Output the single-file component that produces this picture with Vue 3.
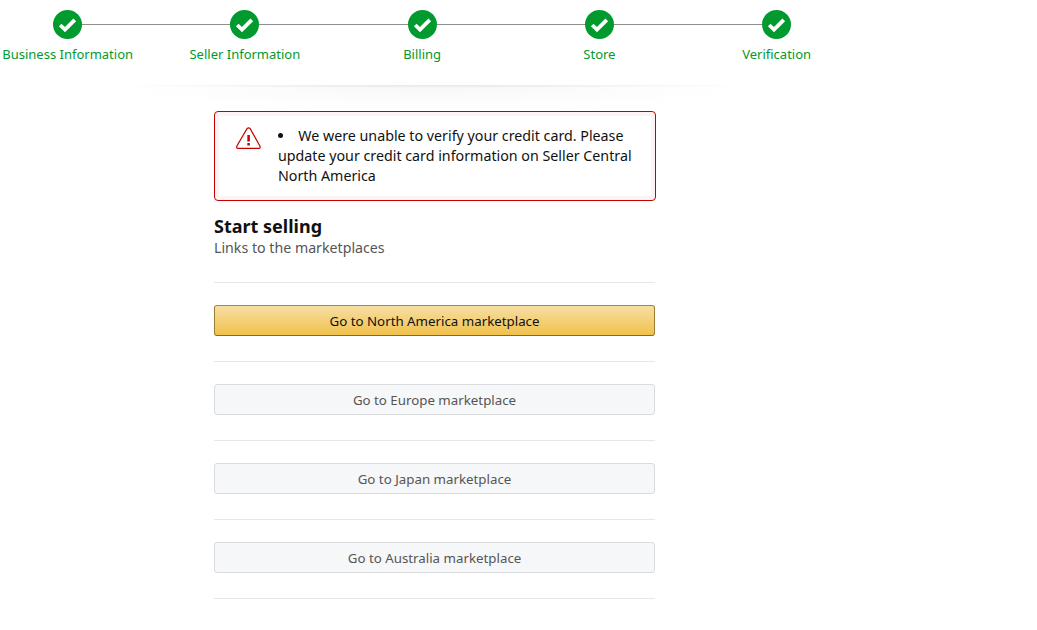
<script setup>
const steps = ['Business Information', 'Seller Information', 'Billing', 'Store', 'Verification']
const markets = [
  { name: 'North America', primary: true },
  { name: 'Europe', primary: false },
  { name: 'Japan', primary: false },
  { name: 'Australia', primary: false },
]
</script>

<template>
  <div class="page">
    <header class="stepper">
      <div v-for="(step, i) in steps" :key="step" class="step" :class="{ last: i === steps.length - 1 }">
        <span class="dot">
          <svg width="29" height="29" viewBox="0 0 29 29">
            <circle cx="14.5" cy="14.5" r="14.5" fill="#019a2e" />
            <path d="M7.2 15l4.8 4.6 9.8-9.8" fill="none" stroke="#fff" stroke-width="3.8" />
          </svg>
        </span>
        <span class="label">{{ step }}</span>
      </div>
    </header>
    <div class="shade"></div>

    <main class="content">
      <div class="alert">
        <svg class="alert-icon" width="26" height="24" viewBox="0 0 26 24">
          <path d="M11 2.6q1.6-1.6 3.2 0L23.9 20q.8 2.3-1 2.3H1.9q-1.8 0-1-2.3z" fill="#fff" stroke="#c40000" stroke-width="1.2" />
          <path d="M12.6 9v6.5M12.6 17v2.5" stroke="#c40000" stroke-width="2.5" fill="none" />
        </svg>
        <ul class="alert-list">
          <li>We were unable to verify your credit card. Please update your credit card information on Seller Central North America</li>
        </ul>
      </div>

      <h2 class="title">Start selling</h2>
      <p class="sub">Links to the marketplaces</p>

      <div v-for="m in markets" :key="m.name" class="market">
        <button class="btn" :class="{ primary: m.primary }">Go to {{ m.name }} marketplace</button>
      </div>
    </main>
  </div>
</template>

<style>
body { background: #fff; }
</style>

<style scoped>
.page { font-family: "Noto Sans", "Open Sans", sans-serif; color: #111; width: 1037px; height: 630px; overflow: hidden; background: #fff; }

.stepper { display: grid; grid-template-columns: repeat(5, 177.25px); margin-left: -21px; padding-top: 10px; height: 85px; box-sizing: border-box; }
.step { display: flex; flex-direction: column; align-items: center; position: relative; }
.step::after { content: ''; position: absolute; top: 14px; left: 50%; width: 100%; height: 1px; background: #8f8f8f; }
.step.last::after { display: none; }
.dot { position: relative; z-index: 1; height: 29px; line-height: 0; }
.label { color: #019a2e; font-size: 13px; line-height: 20px; margin-top: 5px; white-space: nowrap; }

.shade { height: 26px; width: 640px; margin-left: 115px; background: radial-gradient(ellipse 50% 3px at 50% 0, #e6e6e6, transparent), radial-gradient(ellipse 50% 100% at 50% 0, #f7f7f7, #fdfdfd 70%, #fff); }

.content { width: 441px; margin-left: 214px; }

.alert { display: flex; box-sizing: border-box; width: 442px; height: 90px; border: 1px solid #c40000; border-radius: 4px; box-shadow: inset 0 0 0 4px #fcf4f4; padding: 14px 20px 0 21px; }
.alert-icon { flex: none; margin-right: 16px; }
.alert-list { margin: 0; padding: 0; list-style-position: inside; font-size: 14.25px; line-height: 20px; color: #111; }

.title { margin: 14px 0 0; font-size: 18px; line-height: 23px; font-weight: 700; color: #111; }
.sub { margin: 0 0 24px; font-size: 14.2px; line-height: 20px; color: #555; }

.market { border-top: 1px solid #e7e7e7; padding: 22px 0 25px; }
.market:last-child { border-bottom: 1px solid #e7e7e7; }
.btn { display: block; width: 441px; height: 31px; box-sizing: border-box; border: 1px solid #d9dbde; border-radius: 3px; background: #f6f7f9; color: #555; font: inherit; font-size: 13.3px; line-height: 29px; padding: 1px 0 0; text-align: center; }
.btn.primary { border-color: #a88734 #9c7e31 #846a29; background: linear-gradient(#f7dfa5, #f0c14b); color: #111; }
</style>
